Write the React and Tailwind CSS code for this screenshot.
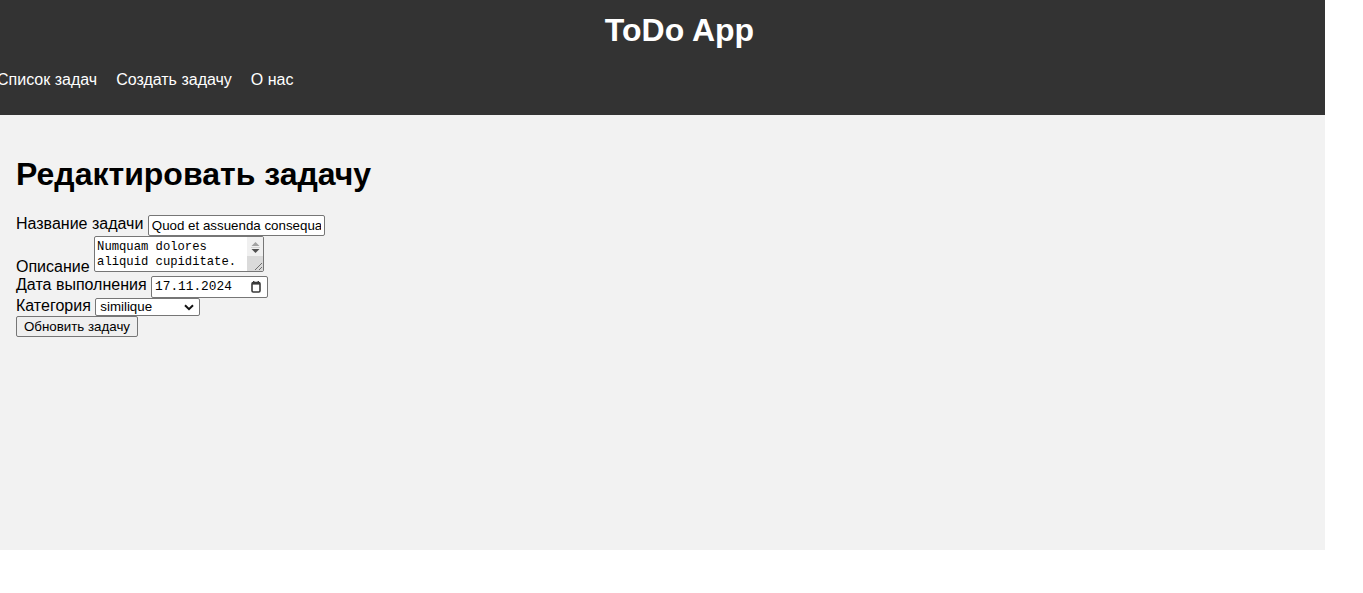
import React from 'react';

const CalendarIcon = () => (
  <svg width="10" height="12" viewBox="0 0 10 12" className="ml-auto mr-[3px]">
    <rect x="1" y="1.5" width="8" height="9.5" rx="1.2" fill="none" stroke="#3a3a3a" strokeWidth="1.6" />
    <rect x="1" y="1" width="8" height="2.6" fill="#3a3a3a" />
    <rect x="2" y="0" width="1.4" height="2" fill="#3a3a3a" />
    <rect x="6.6" y="0" width="1.4" height="2" fill="#3a3a3a" />
  </svg>
);

const Chevron = () => (
  <svg width="10" height="7" viewBox="0 0 10 7" className="ml-auto">
    <path d="M1 1.2 L5 5.2 L9 1.2" fill="none" stroke="#111" strokeWidth="2" />
  </svg>
);

// fake classic scrollbar next to the textarea
const Scrollbar = () => (
  <span className="w-[16px] flex flex-col shrink-0">
    <span className="h-[19px] bg-[#f0f0f0] flex flex-col items-center pt-[5px]">
      <svg width="9" height="12" viewBox="0 0 9 12">
        <path d="M0.5 4 L4.5 0 L8.5 4 Z" fill="#a3a3a3" />
        <rect x="0" y="5" width="9" height="1" fill="#d4d4d4" />
        <path d="M0.5 7 L8.5 7 L4.5 11 Z" fill="#505050" />
      </svg>
    </span>
    <span className="flex-1 bg-[#dadada] flex items-end justify-end">
      <svg width="10" height="10" viewBox="0 0 10 10">
        <path d="M9 2 L2 9 M9 6 L6 9" stroke="#6f6f6f" strokeWidth="1" />
      </svg>
    </span>
  </span>
);

export default function App() {
  return (
    <div className="w-[1325px] font-['Liberation_Sans',Arial,sans-serif] text-black">
      {/* Header */}
      <header className="h-[115px] bg-[#333333] text-white pt-3">
        <h1 className="text-center pl-[34px] text-[32px] font-bold leading-[37px]">ToDo App</h1>
        <nav className="mt-[22px] flex gap-[19px] -ml-[3px] text-[16px] leading-[18px]">
          <a href="#">Список задач</a>
          <a href="#">Создать задачу</a>
          <a href="#">О нас</a>
        </nav>
      </header>

      {/* Edit form */}
      <main className="h-[435px] bg-[#f2f2f2] px-4 pt-5">
        <h1 className="mt-[21px] mb-[21px] text-[32px] font-bold leading-[37px]">Редактировать задачу</h1>
        <form className="pt-[1px] text-[16px] leading-[18px]" onSubmit={(e) => e.preventDefault()}>
          <div>
            <label>Название задачи</label>{' '}
            <input
              type="text"
              defaultValue="Quod et assuenda consequatur"
              className="w-[177px] h-[21px] border border-[#767676] rounded-[2px] bg-white px-[3px] text-[13.33px] leading-[15px] align-[-1px]"
            />
          </div>
          <div>
            <label>Описание</label>{' '}
            <span className="inline-block overflow-hidden align-baseline w-[170px] h-[36px] border border-[#767676] rounded-[2px] bg-white">
              <span className="flex h-full">
                <textarea
                  rows={2}
                  defaultValue="Numquam dolores aliquid cupiditate. Voluptatem quasi eos nesciunt dolorem ut."
                  className="flex-1 min-w-0 h-full resize-none overflow-hidden pl-[2px] pt-[3px] font-['Liberation_Mono',monospace] text-[12.2px] leading-[15.3px] outline-none"
                />
                <Scrollbar />
              </span>
            </span>
          </div>
          <div>
            <label>Дата выполнения</label>{' '}
            <span className="inline-flex items-center w-[117px] h-[22px] border border-[#767676] rounded-[2px] bg-white pl-[3px] pr-[3px] font-['Liberation_Mono',monospace] text-[12.8px] align-baseline">
              <span>17.11.2024</span>
              <CalendarIcon />
            </span>
          </div>
          <div className="-mt-[1px]">
            <label>Категория</label>{' '}
            <span className="inline-flex items-center w-[105px] h-[18px] border border-[#767676] rounded-[2px] bg-white pl-[4px] pr-[5px] text-[13.33px] align-baseline">
              <span>similique</span>
              <Chevron />
            </span>
          </div>
          <div>
            <button
              type="submit"
              className="w-[122px] h-[21px] border border-[#767676] rounded-[2px] bg-[#efefef] text-[13.33px] leading-[15px]"
            >
              Обновить задачу
            </button>
          </div>
        </form>
      </main>
    </div>
  );
}
